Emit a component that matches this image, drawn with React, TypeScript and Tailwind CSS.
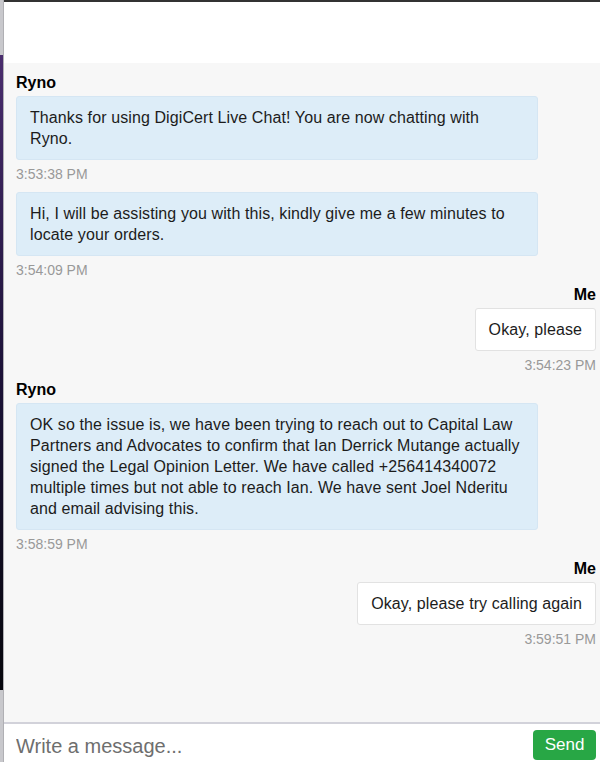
const messages = [
  {
    from: "Ryno",
    showName: true,
    text: "Thanks for using DigiCert Live Chat! You are now chatting with Ryno.",
    time: "3:53:38 PM",
  },
  {
    from: "Ryno",
    showName: false,
    text: "Hi, I will be assisting you with this, kindly give me a few minutes to locate your orders.",
    time: "3:54:09 PM",
  },
  { from: "Me", showName: true, text: "Okay, please", time: "3:54:23 PM" },
  {
    from: "Ryno",
    showName: true,
    text: "OK so the issue is, we have been trying to reach out to Capital Law Partners and Advocates to confirm that Ian Derrick Mutange actually signed the Legal Opinion Letter. We have called +256414340072 multiple times but not able to reach Ian. We have sent Joel Nderitu and email advising this.",
    time: "3:58:59 PM",
  },
  {
    from: "Me",
    showName: true,
    text: "Okay, please try calling again",
    time: "3:59:51 PM",
  },
];

export default function App() {
  return (
    <div className="flex h-screen w-[600px] overflow-hidden font-['Liberation_Sans',Arial,sans-serif] text-[#1c1c1c]">
      {/* page behind the widget */}
      <div className="flex w-[3px] flex-col">
        <div className="h-[55px] bg-[#c8c8cc]" />
        <div className="flex-1 bg-gradient-to-b from-[#4a2d6e] via-[#1c1238] to-[#07070d]" />
        <div className="h-[72px] bg-[#c8c8cc]" />
      </div>
      <div className="flex flex-1 flex-col border-l border-[#b0b0b4]">
        <div className="h-[63px] border-t-2 border-[#333] bg-white" />

        <div className="flex-1 bg-[#f7f7f7] pl-[12px] pr-[4px] pt-[4px]">
          {messages.map((m, i) => {
            const me = m.from === "Me";
            return (
              <div
                key={i}
                className={`flex flex-col ${m.showName ? "mt-[7px]" : "mt-[9px]"} ${
                  me ? "items-end" : "items-start"
                }`}
              >
                {m.showName && (
                  <div className="mb-[4px] text-[16px] font-bold leading-[18px] text-black">
                    {m.from}
                  </div>
                )}
                <div
                  className={
                    me
                      ? "max-w-[90%] rounded-[3px] border border-[#e2e2e2] bg-white px-[13px] py-[10px] text-[16px] leading-[21px] tracking-[0.1px]"
                      : "max-w-[90%] rounded-[3px] border border-[#d5e6f3] bg-[#ddedf8] px-[13px] py-[10px] text-[16px] leading-[21px] tracking-[0.1px]"
                  }
                >
                  {m.text}
                </div>
                <div className="mt-[6px] text-[14px] leading-[17px] text-[#999]">
                  {m.time}
                </div>
              </div>
            );
          })}
        </div>

        <div className="flex h-[40px] items-center border-t-2 border-[#d2d2da] bg-white pl-[12px] pr-[4px]">
          <input
            className="flex-1 bg-transparent pt-[6px] text-[20px] text-[#333] outline-none placeholder:text-[#6e6e6e]"
            placeholder="Write a message..."
          />
          <button className="mt-[4px] h-[30px] w-[63px] rounded-[4px] bg-[#28a745] text-[17px] text-white">
            Send
          </button>
        </div>
      </div>
    </div>
  );
}
